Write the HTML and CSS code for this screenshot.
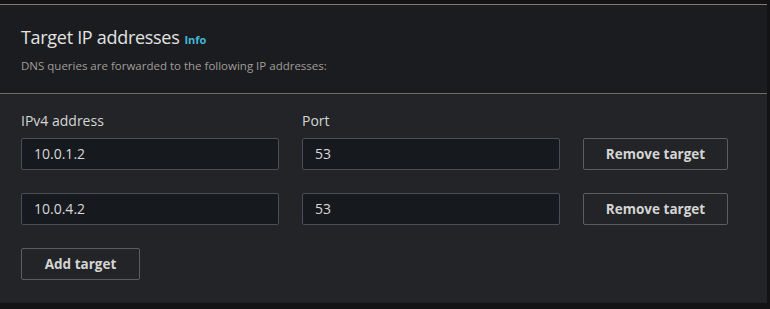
FILE: index.html
```html
<!DOCTYPE html>
<html>
<head>
<meta charset="utf-8">
<link rel="stylesheet" href="styles.css">
</head>
<body>
<div class="panel">
  <div class="header">
    <div class="title-row"><span class="title">Target IP addresses</span><span class="info">Info</span></div>
    <div class="desc">DNS queries are forwarded to the following IP addresses:</div>
  </div>
  <div class="content">
    <div class="grid">
      <div class="label">IPv4 address</div>
      <div class="label">Port</div>
      <div></div>
      <div class="input">10.0.1.2</div>
      <div class="input">53</div>
      <button class="btn">Remove target</button>
      <div class="input">10.0.4.2</div>
      <div class="input">53</div>
      <button class="btn">Remove target</button>
    </div>
    <button class="btn add">Add target</button>
  </div>
</div>
</body>
</html>
```
FILE: styles.css
```css
html, body {
  margin: 0;
  padding: 0;
  background: #131316;
  font-family: "Open Sans", "Noto Sans", sans-serif;
  width: 770px;
  height: 309px;
  overflow: hidden;
}
.panel {
  margin-top: 4px;
  width: 767px;
  background: #232427;
  border-top: 1px solid #857a6c;
}
.header {
  background: #1b1c20;
  padding: 21px 21px 19px;
  border-bottom: 1px solid #6f6a63;
}
.title-row {
  display: flex;
  align-items: baseline;
  line-height: 22px;
  margin-bottom: 7px;
}
.title {
  font-size: 18px;
  color: #e3e3e3;
  letter-spacing: -0.3px;
}
.info {
  font-size: 11px;
  font-weight: 700;
  color: #44b8d6;
  margin-left: 5px;
}
.desc {
  font-size: 11.5px;
  line-height: 16px;
  color: #a19d97;
}
.content {
  padding: 16px 21px 23px;
}
.grid {
  display: grid;
  grid-template-columns: 258px 258px 145px;
  column-gap: 23px;
  row-gap: 23px;
  align-items: center;
}
.label {
  font-size: 14px;
  line-height: 22px;
  color: #d5d5d5;
  margin-bottom: -17px;
}
.input {
  box-sizing: border-box;
  height: 32px;
  border: 1px solid #4b4f55;
  border-radius: 2px;
  background: #16191e;
  color: #d8d8d8;
  font-size: 14px;
  line-height: 30px;
  padding-left: 12px;
}
.btn {
  box-sizing: border-box;
  height: 32px;
  border: 1px solid #5a5d62;
  border-radius: 2px;
  background: transparent;
  color: #d5d5d5;
  font-family: "Open Sans", "Noto Sans", sans-serif;
  font-size: 13.5px;
  font-weight: 700;
  padding: 0;
  text-align: center;
}
.add {
  display: block;
  width: 119px;
  margin-top: 23px;
}
```
